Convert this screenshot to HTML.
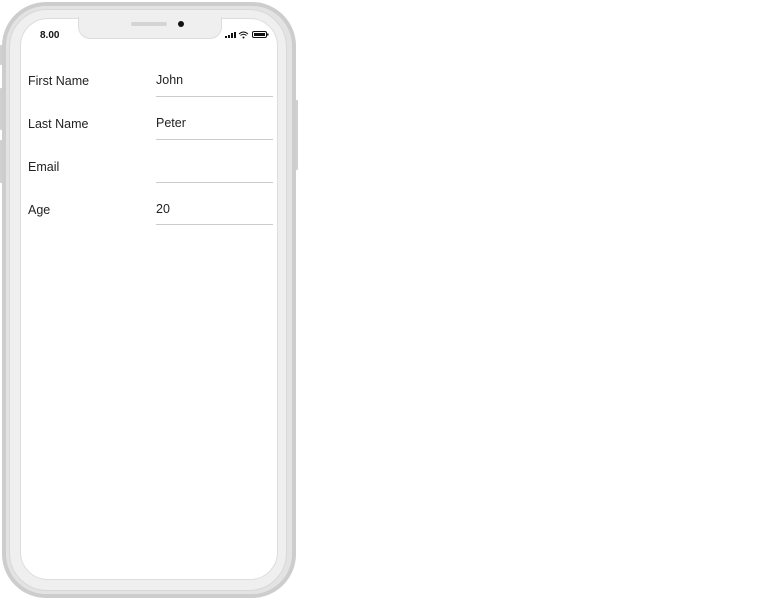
<!DOCTYPE html>
<html><head><style>
body{margin:0;width:780px;height:600px;background:#fff;position:relative;overflow:hidden;font-family:"Liberation Sans",sans-serif;}
.a{position:absolute;}
.outer{left:2px;top:2px;width:286px;height:588px;border:4px solid #cdcdcd;border-radius:44px;background:#e3e3e3;}
.bezel{left:9px;top:9px;width:278px;height:582px;border-radius:38px;background:#efefef;border:1px solid #d8d8d8;box-sizing:border-box;}
.screen{left:20px;top:18px;width:258px;height:562px;border-radius:28px;background:#fff;border:1px solid #ddd;box-sizing:border-box;}
.notch{left:78px;top:17px;width:144px;height:22px;background:#efefef;border-radius:0 0 12px 12px;border:1px solid #ddd;border-top:none;box-sizing:border-box;}
.btn{background:#d0d0d0;border-radius:1px;}
.lbl{font-size:12.5px;color:#222;left:28px;}
.val{font-size:12.5px;color:#222;left:156px;}
.ln{left:156px;width:117px;height:1px;background:#ccc;}
</style></head><body>
<div class="a btn" style="left:0;top:45px;width:3px;height:20px"></div>
<div class="a btn" style="left:0;top:88px;width:3px;height:42px"></div>
<div class="a btn" style="left:0;top:140px;width:3px;height:43px"></div>
<div class="a btn" style="left:294px;top:100px;width:4px;height:70px"></div>
<div class="a outer"></div>
<div class="a bezel"></div>
<div class="a screen"></div>
<div class="a notch"></div>
<div class="a" style="left:131px;top:22px;width:36px;height:4px;border-radius:2px;background:#d4d4d4"></div>
<div class="a" style="left:178px;top:21px;width:6px;height:6px;border-radius:50%;background:#111"></div>
<div class="a" style="left:40px;top:30px;font-size:10px;font-weight:bold;color:#111">8.00</div>
<svg class="a" style="left:224px;top:30px" width="46" height="10" viewBox="0 0 46 10">
<rect x="1" y="6" width="2" height="2" fill="#111"/><rect x="4" y="5" width="2" height="3" fill="#111"/><rect x="7" y="3" width="2" height="5" fill="#111"/><rect x="10" y="2" width="2" height="6" fill="#111"/>
<path d="M15 4 Q19.5 0 24 4 M16.5 5.5 Q19.5 3 22.5 5.5" stroke="#111" stroke-width="1" fill="none"/><circle cx="19.5" cy="7.5" r="1" fill="#111"/>
<rect x="28.5" y="1.5" width="14" height="6" rx="1.5" fill="none" stroke="#111"/><rect x="30" y="3" width="11" height="3" fill="#111"/><rect x="43" y="3.5" width="1.5" height="2" fill="#111"/>
</svg>
<div class="a lbl" style="top:74px">First Name</div><div class="a val" style="top:73px">John</div><div class="a ln" style="top:96px"></div>
<div class="a lbl" style="top:117px">Last Name</div><div class="a val" style="top:116px">Peter</div><div class="a ln" style="top:139px"></div>
<div class="a lbl" style="top:160px">Email</div><div class="a ln" style="top:182px"></div>
<div class="a lbl" style="top:203px">Age</div><div class="a val" style="top:202px">20</div><div class="a ln" style="top:224px"></div>
</body></html>
